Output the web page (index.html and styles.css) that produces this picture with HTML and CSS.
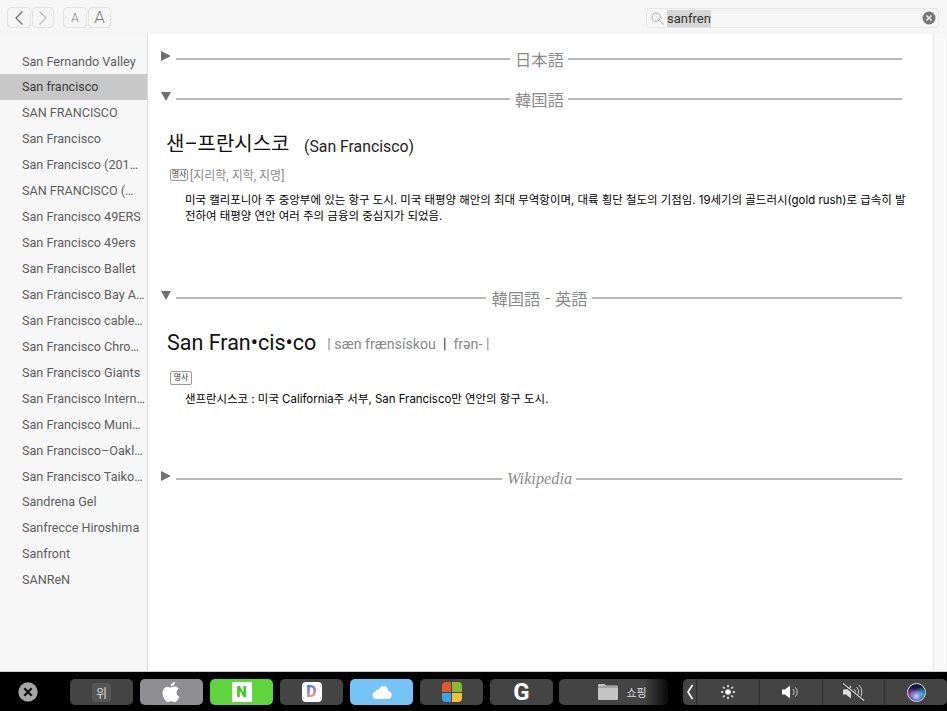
FILE: index.html
```html
<!DOCTYPE html>
<html lang="ko">
<head>
<meta charset="utf-8">
<title>Dictionary</title>
<link rel="stylesheet" href="styles.css">
</head>
<body>
<header class="toolbar">
  <div class="btn-group">
    <button class="tool-btn nav"><svg width="12" height="16" viewBox="0 0 12 16"><path d="M9.5 1.5 3 8l6.5 6.5" fill="none" stroke="#666" stroke-width="1.2"/></svg></button>
    <button class="tool-btn nav fwd"><svg width="12" height="16" viewBox="0 0 12 16"><path d="M2.5 1.5 9 8l-6.5 6.5" fill="none" stroke="#bbb" stroke-width="1.2"/></svg></button>
  </div>
  <div class="btn-group fonts">
    <button class="tool-btn small-a">A</button>
    <button class="tool-btn big-a">A</button>
  </div>
  <div class="search">
    <svg class="search-icon" width="13" height="13" viewBox="0 0 13 13"><circle cx="5.2" cy="5.2" r="4.2" fill="none" stroke="#aaa"/><path d="m8.2 8.2 4.2 4.2" stroke="#aaa" stroke-width="1"/></svg>
    <span class="search-text">sanfren</span>
    <svg class="search-clear" width="14" height="14" viewBox="0 0 14 14"><circle cx="7" cy="7" r="6.5" fill="#777"/><path d="m4.5 4.5 5 5m0-5-5 5" stroke="#eee" stroke-width="1.6"/></svg>
  </div>
</header>

<div class="window">
  <nav class="sidebar">
    <div class="row">San Fernando Valley</div>
    <div class="row selected">San francisco</div>
    <div class="row">SAN FRANCISCO</div>
    <div class="row">San Francisco</div>
    <div class="row">San Francisco (201…</div>
    <div class="row">SAN FRANCISCO (…</div>
    <div class="row">San Francisco 49ERS</div>
    <div class="row">San Francisco 49ers</div>
    <div class="row">San Francisco Ballet</div>
    <div class="row">San Francisco Bay A…</div>
    <div class="row">San Francisco cable…</div>
    <div class="row">San Francisco Chro…</div>
    <div class="row">San Francisco Giants</div>
    <div class="row">San Francisco Intern…</div>
    <div class="row">San Francisco Muni…</div>
    <div class="row">San Francisco–Oakl…</div>
    <div class="row">San Francisco Taiko…</div>
    <div class="row">Sandrena Gel</div>
    <div class="row">Sanfrecce Hiroshima</div>
    <div class="row">Sanfront</div>
    <div class="row">SANReN</div>
  </nav>

  <main class="content">
    <section class="sec sec-ja">
      <div class="sec-head">
        <span class="tri tri-right"></span>
        <span class="line"></span>
        <span class="sec-title">日本語</span>
        <span class="line"></span>
      </div>
    </section>

    <section class="sec sec-ko">
      <div class="sec-head">
        <span class="tri tri-down"></span>
        <span class="line"></span>
        <span class="sec-title">韓国語</span>
        <span class="line"></span>
      </div>
      <div class="entry">
        <div class="headline-ko"><span class="word-ko">샌–프란시스코</span><span class="word-orig">(San Francisco)</span></div>
        <div class="pos-line"><span class="tag">명사</span><span class="domain">[지리학, 지학, 지명]</span></div>
        <p class="def">미국 캘리포니아 주 중앙부에 있는 항구 도시. 미국 태평양 해안의 최대 무역항이며, 대륙 횡단 철도의 기점임. 19세기의 골드러시(gold rush)로 급속히 발<br>전하여 태평양 연안 여러 주의 금융의 중심지가 되었음.</p>
      </div>
    </section>

    <section class="sec sec-koen">
      <div class="sec-head">
        <span class="tri tri-down"></span>
        <span class="line"></span>
        <span class="sec-title">韓国語 - 英語</span>
        <span class="line"></span>
      </div>
      <div class="entry">
        <div class="headline-en"><span class="word-en">San Fran<span class="dot">•</span>cis<span class="dot">•</span>co</span><span class="phon">| sæn frænsískou &nbsp;<b class="bar">|</b>&nbsp; frən- |</span></div>
        <div class="pos-line second"><span class="tag tag-lg">명사</span></div>
        <p class="def">샌프란시스코 : 미국 California주 서부, San Francisco만 연안의 항구 도시.</p>
      </div>
    </section>

    <section class="sec sec-wiki">
      <div class="sec-head">
        <span class="tri tri-right"></span>
        <span class="line"></span>
        <span class="sec-title wiki">Wikipedia</span>
        <span class="line"></span>
      </div>
    </section>
  </main>
  <div class="edge"></div>
</div>

<footer class="touchbar">
  <svg class="tb-close" width="20" height="20" viewBox="0 0 20 20"><circle cx="10" cy="10" r="9.7" fill="#a6a6a6"/><path d="m6.3 6.3 7.4 7.4m0-7.4-7.4 7.4" stroke="#111" stroke-width="2.2"/></svg>
  <div class="tb-apps">
    <div class="tb-btn"><span class="wi">위</span></div>
    <div class="tb-btn light"><svg width="20" height="22" viewBox="3 1 19 22"><path fill="#fff" d="M17.05 12.54c-.03-2.6 2.12-3.85 2.22-3.91-1.21-1.77-3.09-2.01-3.76-2.04-1.6-.16-3.12.94-3.93.94-.81 0-2.06-.92-3.39-.89-1.74.03-3.35 1.01-4.25 2.57-1.81 3.14-.46 7.8 1.3 10.35.86 1.25 1.89 2.65 3.24 2.6 1.3-.05 1.79-.84 3.36-.84s2.01.84 3.39.81c1.4-.02 2.28-1.27 3.14-2.53.99-1.45 1.4-2.85 1.42-2.93-.03-.01-2.72-1.04-2.74-4.13zM14.47 4.91c.72-.87 1.2-2.08 1.07-3.28-1.03.04-2.28.69-3.02 1.55-.66.77-1.24 2-1.09 3.18 1.15.09 2.33-.58 3.04-1.45z"/></svg></div>
    <div class="tb-btn green"><span class="naver">N</span></div>
    <div class="tb-btn"><span class="daum"><span class="daum-d">D</span></span></div>
    <div class="tb-btn sky"><svg width="20" height="13" viewBox="0 0 20 13"><path fill="#fff" d="M4 13a3.7 3.7 0 0 1-.6-7.3C4 3.900 5.500 3.200 6.800 3.500 7.800 1.300 9.600 0 11.600 0c2.700 0 4.700 2.100 4.800 4.900A4.100 4.100 0 0 1 15.800 13z"/></svg></div>
    <div class="tb-btn"><span class="tiles"><i class="t1"></i><i class="t2"></i><i class="t3"></i><i class="t4"></i></span></div>
    <div class="tb-btn"><span class="google">G</span></div>
    <div class="tb-btn folder-btn">
      <svg width="20" height="16" viewBox="0 0 20 16"><path fill="#c4c4c4" d="M0 1.200C0 .5.500 0 1.200 0h5.300l1.500 1.500h10.800c.7 0 1.200.5 1.200 1.200v12c0 .7-.5 1.300-1.200 1.300H1.200C.5 16 0 15.400 0 14.700z"/><path fill="none" stroke="#555" stroke-width=".6" d="M0 3h20"/></svg>
      <span class="folder-label">쇼핑</span>
    </div>
  </div>
  <div class="tb-strip">
    <div class="strip-item chev"><svg width="8" height="16" viewBox="0 0 8 16"><path d="M6.500 1 2 8l4.500 7" fill="none" stroke="#fff" stroke-width="1.600"/></svg></div>
    <div class="strip-item"><svg width="14" height="14" viewBox="0 0 14 14"><circle cx="7" cy="7" r="2.800" fill="#fff"/><path d="M7 0v2.200M7 11.800V14M0 7h2.200M11.800 7H14M2 2l1.600 1.600M10.400 10.400 12 12M2 12l1.600-1.600M10.400 3.600 12 2" stroke="#fff" stroke-width="1.400"/></svg></div>
    <div class="strip-item"><svg width="18" height="14" viewBox="0 0 18 14"><path fill="#fff" d="M0 4.500h3L8 .5v13l-5-4H0z"/><path d="M11 4a4.500 4.500 0 0 1 0 6M13.500 2.500a7.500 7.500 0 0 1 0 9" fill="none" stroke="#ccc" stroke-width="1"/></svg></div>
    <div class="strip-item"><svg width="23" height="18" viewBox="0 0 23 18"><path fill="#ddd" d="M1 6.500h3L9 2.500v13l-5-4H1z"/><path d="M12 6a4 4 0 0 1 0 6M14.500 4a7 7 0 0 1 0 10M17 2a10 10 0 0 1 0 14" fill="none" stroke="#ccc" stroke-width="1"/><path d="M1 1l20 16" stroke="#222" stroke-width="2.600"/><path d="M1 .5l21 17" stroke="#ddd" stroke-width="1.100"/></svg></div>
    <div class="strip-item"><span class="siri"></span></div>
  </div>
</footer>
</body>
</html>
```
FILE: styles.css
```css
* { box-sizing: border-box; }
html, body { margin: 0; height: 711px; overflow: hidden; }
body {
  display: flex;
  flex-direction: column;
  font-family: Roboto, "Noto Sans CJK KR", sans-serif;
  background: #000;
}

.toolbar {
  height: 34px;
  flex: none;
  display: flex;
  align-items: flex-start;
  padding: 7px 8px 0 7px;
  background: #f6f6f6;
}
.btn-group { display: flex; gap: 1px; }
.fonts { margin-left: 9px; }
.tool-btn {
  width: 24px;
  height: 21px;
  padding: 0;
  display: flex;
  align-items: center;
  justify-content: center;
  background: #f6f6f6;
  border: 1px solid #e3e3e3;
  border-radius: 4px;
  font-family: inherit;
  font-weight: 300;
  color: #777;
  line-height: 1;
}
.fwd { width: 22px; }
.small-a { font-size: 12px; }
.big-a { font-size: 17px; width: 23px; }
.search {
  margin-left: auto;
  width: 293px;
  height: 20px;
  margin-top: 1px;
  display: flex;
  align-items: center;
  padding: 0 2px 0 4px;
  background: #f6f6f6;
  border: 1px solid #e6e6e6;
  border-radius: 4px;
}
.search-icon { flex: none; }
.search-text {
  margin-left: 3px;
  background: #d6d6d6;
  font-size: 13px;
  line-height: 17px;
  color: #333;
}
.search-clear { margin-left: auto; }

.window {
  height: 638px;
  flex: none;
  display: flex;
  background: #fff;
  border-bottom: 1px solid #ccc;
}
.sidebar {
  width: 148px;
  flex: none;
  padding-top: 14.500px;
  background: #f7f7f7;
  border-right: 1px solid #dcdcdc;
}
.row {
  height: 25.950px;
  line-height: 25.950px;
  padding-left: 22px;
  font-size: 12.600px;
  color: #5c5c5c;
  white-space: nowrap;
}
.selected { background: #c8c8c8; color: #3c3c3c; }

.content {
  flex: 1;
  min-width: 0;
  padding: 15px 31px 0 13px;
  color: #111;
}
.edge {
  width: 14px;
  flex: none;
  background: #f9f9f9;
  border-left: 1px solid #e6e6e6;
  border-right: 1px solid #f0f0f0;
}

.sec-head {
  height: 20px;
  display: flex;
  align-items: center;
}
.tri { flex: none; width: 0; height: 0; margin-right: 5px; }
.tri-right {
  margin-top: -6px;
  border-top: 5px solid transparent;
  border-bottom: 5px solid transparent;
  border-left: 10px solid #707070;
}
.tri-down {
  margin-top: -5px;
  border-left: 5px solid transparent;
  border-right: 5px solid transparent;
  border-top: 9px solid #707070;
}
.line { flex: 1; height: 2px; background: #b8b8b8; }
.sec-title {
  margin: 0 4px 0 5px;
  font-family: "Noto Sans CJK JP", sans-serif;
  font-size: 16.300px;
  line-height: 20px;
  color: #8a8a8a;
  white-space: nowrap;
}
.wiki {
  font-family: "Liberation Serif", serif;
  font-style: italic;
  font-size: 16.300px;
}
.sec-ko { margin-top: 20px; height: 199px; }
.sec-koen { height: 181px; }

.entry { padding-left: 5px; }
.headline-ko {
  margin-top: 21px;
  height: 28px;
  display: flex;
  align-items: center;
}
.word-ko { font-size: 20px; line-height: 28px; color: #111; width: 138px; flex: none; white-space: nowrap; }
.word-orig { margin-top: 4px; font-size: 15.800px; color: #222; white-space: nowrap; }
.pos-line { display: flex; align-items: center; margin-top: 9px; height: 15px; padding-left: 4px; }
.tag {
  width: 18px;
  height: 12px;
  border: 1px solid #999;
  border-radius: 2px;
  font-size: 8px;
  line-height: 10px;
  text-align: center;
  color: #333;
  white-space: nowrap;
}
.tag-lg { width: 22px; height: 14px; line-height: 12px; }
.domain { margin-left: 2px; font-size: 12px; color: #888; white-space: nowrap; }
.def {
  margin: 10px 0 0 19px;
  font-family: Inter, "Noto Sans CJK KR", sans-serif;
  font-size: 11.450px;
  line-height: 16px;
  color: #000;
  white-space: nowrap;
}
.headline-en {
  margin-top: 19px;
  margin-left: 1px;
  height: 30px;
  display: flex;
  align-items: center;
}
.word-en { font-size: 21.500px; color: #111; white-space: nowrap; }
.dot { font-size: 21.500px; }
.phon { margin-left: 11px; margin-top: 4px; font-size: 14.200px; color: #888; white-space: nowrap; }
.bar { font-weight: 400; color: #333; }
.second { margin-top: 13px; }
.second + .def { margin-top: 6px; }

.touchbar {
  height: 39px;
  flex: none;
  display: flex;
  align-items: flex-start;
  padding-top: 7px;
  padding-left: 18px;
  background: #000;
}
.tb-close { margin-top: 3px; flex: none; }
.tb-apps { display: flex; gap: 7px; margin-left: 32px; }
.tb-btn {
  width: 63px;
  height: 26px;
  display: flex;
  align-items: center;
  justify-content: center;
  border-radius: 5px;
  background: #444;
}
.light { background: #8e8e92; }
.green { background: #5fd43f; }
.sky { background: #76c3f6; }
.wi {
  width: 19px;
  height: 19px;
  display: flex;
  align-items: center;
  justify-content: center;
  background: #555;
  border-radius: 3px;
  font-size: 12px;
  color: #ddd;
}
.naver {
  width: 20px;
  height: 20px;
  display: flex;
  align-items: center;
  justify-content: center;
  background: #fff;
  color: #3dc62c;
  font-weight: 900;
  font-size: 15px;
}
.daum {
  width: 20px;
  height: 20px;
  display: flex;
  align-items: center;
  justify-content: center;
  background: #fff;
  border-radius: 4px;
}
.daum-d {
  font-weight: 900;
  font-size: 16px;
  line-height: 1;
  background: linear-gradient(160deg, #4b7bec 20%, #c77bd0 50%, #f7b733 85%);
  -webkit-background-clip: text;
  background-clip: text;
  color: transparent;
}
.tiles {
  width: 20px;
  height: 20px;
  display: grid;
  grid-template-columns: 1fr 1fr;
  gap: 1px;
  border-radius: 4px;
  overflow: hidden;
}
.t1 { background: #e25a2c; }
.t2 { background: #86b83a; }
.t3 { background: #3fa0ea; }
.t4 { background: #f5bd3a; }
.google { font-family: Roboto, sans-serif; font-weight: 700; font-size: 24px; color: #fff; line-height: 1; }
.folder-btn {
  width: 109px;
  gap: 8px;
  margin-left: -1px;
  padding-left: 18px;
  background: linear-gradient(90deg, #444 0, #444 78%, #0a0a0a 100%);
}
.folder-label { font-size: 11px; color: #ddd; }
.tb-strip {
  display: flex;
  margin-left: 15px;
  width: 265px;
  height: 26px;
  gap: 1px;
  border-radius: 5px;
  overflow: hidden;
  background: #2c2c2c;
}
.strip-item {
  flex: 1;
  display: flex;
  align-items: center;
  justify-content: center;
  background: #444;
}
.chev { flex: none; width: 13px; }
.siri {
  width: 19px;
  height: 19px;
  border-radius: 50%;
  background:
    radial-gradient(circle at 50% 72%, #cfe6ff 0, #7a8fe8 22%, transparent 45%),
    radial-gradient(circle at 25% 65%, #d255c8 0, transparent 45%),
    radial-gradient(circle at 78% 60%, #46c6e8 0, transparent 45%),
    #141a3c;
  border: 1px solid #ddd;
}
```
